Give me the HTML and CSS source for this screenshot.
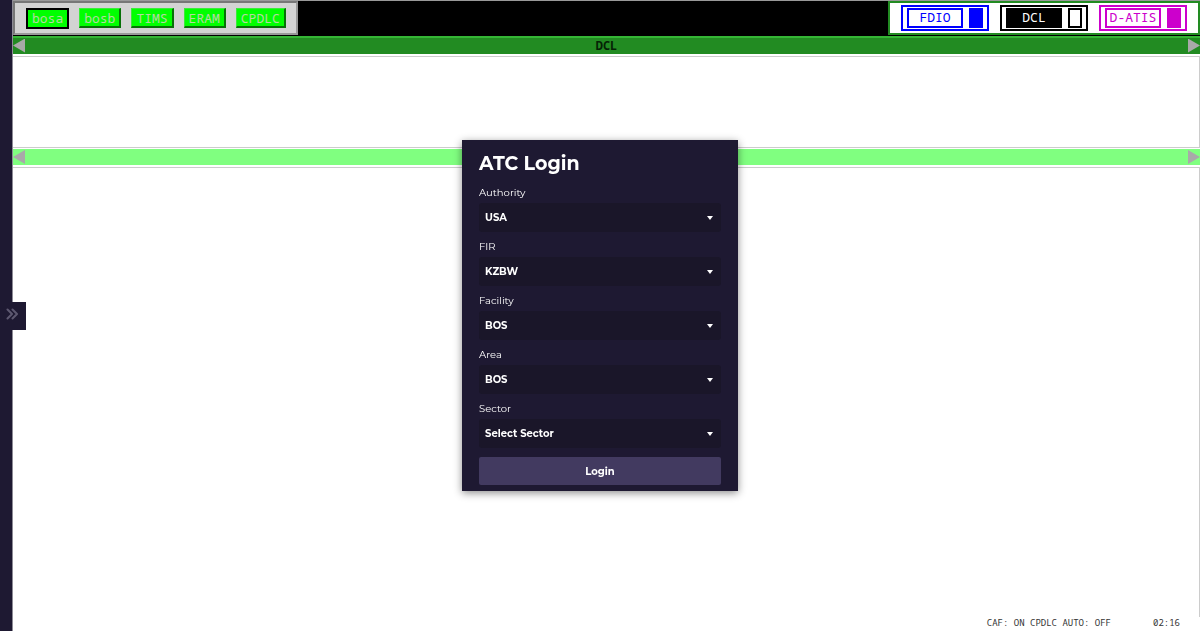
FILE: index.html
```html
<!DOCTYPE html>
<html lang="en">
<head>
<meta charset="utf-8">
<meta name="viewport" content="width=device-width, initial-scale=1">
<title>ATC Login</title>
<link rel="stylesheet" href="styles.css">
</head>
<body>
<div class="app">
  <aside class="sidebar">
    <button class="sidebar-toggle" type="button" aria-label="Expand sidebar">
      <svg viewBox="0 0 12 12" width="12" height="12" fill="none" stroke="currentColor" stroke-width="2" stroke-linecap="round" stroke-linejoin="round"><path d="M1.5 1.5 6 6 1.5 10.5M6.5 1.5 11 6 6.5 10.5"/></svg>
    </button>
  </aside>
  <main class="workspace">
    <header class="toolbar">
      <nav class="systems">
        <button class="system system-active" type="button">bosa</button>
        <button class="system" type="button">bosb</button>
        <button class="system" type="button">TIMS</button>
        <button class="system" type="button">ERAM</button>
        <button class="system" type="button">CPDLC</button>
      </nav>
      <nav class="modes">
        <button class="mode mode-fdio" type="button"><span class="mode-name">FDIO</span><span class="mode-lamp"></span></button>
        <button class="mode mode-dcl" type="button"><span class="mode-name">DCL</span><span class="mode-lamp"></span></button>
        <button class="mode mode-datis" type="button"><span class="mode-name">D-ATIS</span><span class="mode-lamp"></span></button>
      </nav>
    </header>
    <div class="strip strip-dark">
      <button class="arrow arrow-left" type="button" aria-label="Previous"></button>
      <span class="strip-title">DCL</span>
      <button class="arrow arrow-right" type="button" aria-label="Next"></button>
    </div>
    <section class="panel panel-short"></section>
    <div class="strip strip-light">
      <button class="arrow arrow-left" type="button" aria-label="Previous"></button>
      <button class="arrow arrow-right" type="button" aria-label="Next"></button>
    </div>
    <section class="panel panel-tall"></section>
    <footer class="status"><span>CAF: ON CPDLC AUTO: OFF</span><span>02:16</span></footer>
  </main>
</div>
<div class="overlay">
  <form class="login">
    <h1 class="login-title">ATC Login</h1>
    <label class="label" for="authority">Authority</label>
    <div class="field"><select class="select" id="authority"><option>USA</option></select></div>
    <label class="label" for="fir">FIR</label>
    <div class="field"><select class="select" id="fir"><option>KZBW</option></select></div>
    <label class="label" for="facility">Facility</label>
    <div class="field"><select class="select" id="facility"><option>BOS</option></select></div>
    <label class="label" for="area">Area</label>
    <div class="field"><select class="select" id="area"><option>BOS</option></select></div>
    <label class="label" for="sector">Sector</label>
    <div class="field"><select class="select" id="sector"><option>Select Sector</option></select></div>
    <button class="submit" type="button">Login</button>
  </form>
</div>
</body>
</html>
```
FILE: styles.css
```css
* {
  box-sizing: border-box;
}

body {
  margin: 0;
  background: #fff;
  font-family: "Noto Sans Mono", "DejaVu Sans Mono", monospace;
}

button,
select {
  margin: 0;
  font-family: inherit;
}

.app {
  display: flex;
  min-height: 100vh;
}

.sidebar {
  position: relative;
  flex: 0 0 13px;
  background: #1e1932;
  border-right: 1px solid #8d8b96;
}

.sidebar-toggle {
  position: absolute;
  z-index: 1;
  top: 50%;
  left: 0;
  width: 26px;
  height: 28px;
  margin-top: -14px;
  padding: 0 0 4px 6px;
  border: 0;
  background: #1e1932;
  color: #5d5870;
  line-height: 0;
  text-align: left;
}

.workspace {
  display: flex;
  flex: 1;
  flex-direction: column;
  min-width: 0;
}

.toolbar {
  display: flex;
  justify-content: space-between;
  height: 36px;
  padding-bottom: 1px;
  border-top: 1px solid #999;
  background: #000;
}

.systems {
  display: flex;
  align-items: center;
  gap: 10px;
  padding: 0 10px 0 11px;
  border: 2px solid #999;
  border-top-color: #777;
  border-left-color: #777;
  background: #d3d3d3;
}

.system {
  height: 20px;
  padding: 0 4px;
  border: 1px solid;
  border-color: #3bea3b #087008 #087008 #3bea3b;
  border-right-width: 2px;
  border-bottom-width: 2px;
  background: #0f0;
  color: #b4d8a2;
  font-size: 13px;
  line-height: 16px;
}

.system-active {
  height: 21px;
  border: 2px solid #000;
}

.modes {
  display: flex;
  align-items: center;
  gap: 11px;
  padding: 0 11px;
  border: 2px solid #228b22;
  background: #fff;
}

.mode {
  display: flex;
  align-items: center;
  justify-content: space-between;
  width: 88px;
  height: 26px;
  padding: 0 4px;
  border: 2px solid currentColor;
  background: #fff;
  font-size: 13px;
}

.mode-name {
  width: 56px;
  height: 20px;
  border: 2px solid;
  line-height: 14px;
  text-align: center;
}

.mode-lamp {
  width: 14px;
  height: 20px;
  border: 2px solid;
  background: currentColor;
}

.mode-fdio {
  color: #00f;
}

.mode-dcl {
  color: #000;
}

.mode-dcl .mode-name {
  border-color: #000;
  background: #000;
  color: #fff;
}

.mode-dcl .mode-lamp {
  background: #fff;
}

.mode-datis {
  color: #c0c;
}

.strip {
  display: flex;
  align-items: center;
  justify-content: space-between;
}

.strip-dark {
  height: 18px;
  border-top: 2px solid #35b535;
  border-bottom: 1px solid #228b22;
  background: #228b22;
}

.strip-light {
  height: 16px;
  margin: 1px 0;
  background: #80ff80;
}

.strip-title {
  color: #052205;
  font-size: 12px;
  font-weight: bold;
  line-height: 14px;
}

.arrow {
  width: 12px;
  height: 14px;
  padding: 0;
  border: 0;
  background: #a9a9a9;
}

.arrow-left {
  clip-path: polygon(0 50%, 100% 0, 100% 100%);
}

.arrow-right {
  clip-path: polygon(0 0, 100% 50%, 0 100%);
}

.panel {
  border: 1px solid #ccc;
  border-left: 0;
  background: #fff;
}

.panel-short {
  height: 92px;
  margin-top: 2px;
}

.panel-tall {
  flex: 1;
  margin-top: 1px;
  border-bottom: 0;
}

.status {
  display: flex;
  justify-content: flex-end;
  gap: 42px;
  height: 14px;
  padding-right: 20px;
  color: #333;
  font-size: 9px;
  line-height: 12px;
}

.overlay {
  position: fixed;
  z-index: 2;
  inset: 0;
  display: grid;
  place-items: center;
  pointer-events: none;
}

.login {
  display: flex;
  flex-direction: column;
  width: 276px;
  padding: 10px 17px 6px;
  background: #1e1932;
  box-shadow: 0 2px 8px rgba(0, 0, 0, 0.45);
  color: #fff;
  font-family: Montserrat, Inter, sans-serif;
  pointer-events: auto;
}

.login-title {
  margin: 0 0 8px;
  font-size: 19px;
  font-weight: 700;
  line-height: 27px;
}

.label {
  color: #fff;
  font-size: 10px;
  line-height: 15px;
}

.field {
  position: relative;
  margin: 3px 0 7px;
}

.field::after {
  content: "";
  position: absolute;
  top: 13px;
  right: 8px;
  border: 3px solid transparent;
  border-top: 4px solid #fff;
  border-bottom: 0;
  pointer-events: none;
}

.select {
  display: block;
  width: 100%;
  height: 29px;
  padding: 0 6px;
  border: 0;
  border-radius: 3px;
  appearance: none;
  background: #1a1629;
  color: #fff;
  font-size: 10px;
  font-weight: 700;
}

.submit {
  height: 28px;
  margin-top: 2px;
  border: 0;
  border-radius: 2px;
  background: #423a60;
  color: #fff;
  font-size: 10px;
  font-weight: 700;
}
```
